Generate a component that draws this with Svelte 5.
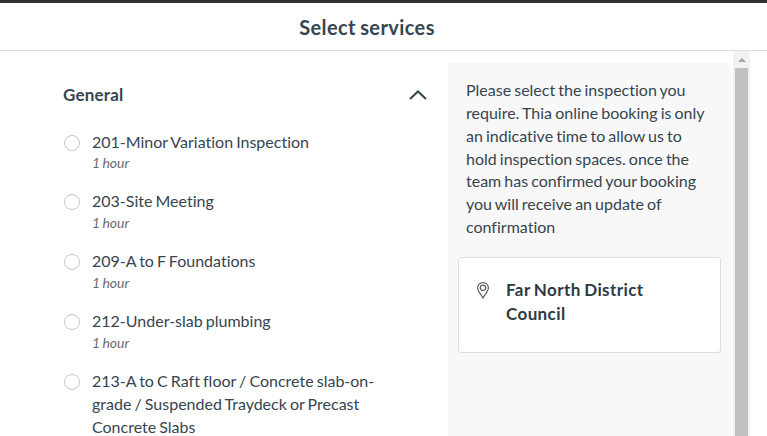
<script lang="ts">
  interface Service {
    id: number;
    name: string;
    duration?: string;
  }

  const services: Service[] = [
    { id: 201, name: '201-Minor Variation Inspection', duration: '1 hour' },
    { id: 203, name: '203-Site Meeting', duration: '1 hour' },
    { id: 209, name: '209-A to F Foundations', duration: '1 hour' },
    { id: 212, name: '212-Under-slab plumbing', duration: '1 hour' },
    {
      id: 213,
      name: '213-A to C Raft floor / Concrete slab-on-grade / Suspended Traydeck or Precast Concrete Slabs'
    }
  ];

  let expanded = $state(true);
  let selected = $state<number | null>(null);
</script>

<div class="page">
  <header class="header">
    <h1>Select services</h1>
  </header>

  <div class="body">
    <main class="services">
      <button class="group-header" aria-expanded={expanded} onclick={() => (expanded = !expanded)}>
        <span>General</span>
        <svg class="chevron" class:collapsed={!expanded} width="18" height="10" viewBox="0 0 18 10" fill="none">
          <path d="M1 9L9 1.4L17 9" stroke="currentColor" stroke-width="2" />
        </svg>
      </button>

      {#if expanded}
        <div class="list">
          {#each services as service (service.id)}
            <label class="service">
              <input type="radio" name="service" value={service.id} bind:group={selected} />
              <span class="details">
                <span class="name">{service.name}</span>
                {#if service.duration}
                  <span class="duration">{service.duration}</span>
                {/if}
              </span>
            </label>
          {/each}
        </div>
      {/if}
    </main>

    <aside class="summary">
      <p>
        Please select the inspection you require. Thia online booking is only an indicative time to
        allow us to hold inspection spaces. once the team has confirmed your booking you will receive
        an update of confirmation
      </p>
      <div class="location">
        <svg width="12" height="17" viewBox="0 0 12 17" fill="none" stroke="currentColor" stroke-width="1.2">
          <path d="M6 16C4.6 12.9 .6 9.1 .6 5.9A5.4 5.3 0 0 1 11.4 5.9C11.4 9.1 7.4 12.9 6 16Z" />
          <circle cx="6" cy="5.8" r="2.7" />
        </svg>
        <strong>Far North District Council</strong>
      </div>
    </aside>

    <div class="scrollbar">
      <div class="arrow"></div>
      <div class="thumb"></div>
    </div>
  </div>
</div>

<style>
  :global(body) {
    background: #fff;
    overflow: hidden;
  }

  .page {
    box-sizing: border-box;
    height: 100vh;
    display: flex;
    flex-direction: column;
    overflow: hidden;
    border-top: 3px solid #302f2f;
    color: #36454f;
    font-family: Lato, sans-serif;
    font-size: 16px;
    font-variant-ligatures: none;
    line-height: 22.857px;
    word-spacing: -1px;
  }

  .header {
    flex: none;
    height: 47px;
    display: flex;
    align-items: center;
    justify-content: center;
    padding-right: 33px;
    border-bottom: 1px solid #dddde5;
  }

  h1 {
    margin: 0;
    font-size: 20px;
    font-weight: 700;
    letter-spacing: 0.4px;
    line-height: 24px;
  }

  .body {
    flex: 1;
    min-height: 0;
    display: flex;
    margin-right: 17px;
  }

  .services {
    width: 364px;
    flex: none;
    padding: 32px 21px 0 63px;
  }

  .group-header {
    display: flex;
    align-items: center;
    justify-content: space-between;
    width: 100%;
    height: 24px;
    padding: 0;
    border: 0;
    background: none;
    color: inherit;
    font: inherit;
    font-size: 17px;
    font-weight: 700;
    letter-spacing: 0.2px;
    cursor: pointer;
  }

  .chevron.collapsed {
    transform: rotate(180deg);
  }

  .list {
    padding-top: 23.5px;
  }

  .service {
    display: flex;
    align-items: flex-start;
    gap: 12px;
    margin-bottom: 17px;
    cursor: pointer;
  }

  input {
    appearance: none;
    box-sizing: border-box;
    flex: none;
    width: 16px;
    height: 16px;
    margin: 4px 0 0 1px;
    border: 1px solid #c4c4c4;
    border-radius: 50%;
  }

  input:checked {
    border: 5px solid #36454f;
  }

  .details {
    max-width: 290px;
  }

  .name,
  .duration {
    display: block;
  }

  .duration {
    color: #6c6c6c;
    font-size: 14px;
    font-style: italic;
    line-height: 20px;
  }

  .summary {
    box-sizing: border-box;
    flex: none;
    width: 283px;
    margin-top: 12px;
    padding: 16px 10px 0;
    background: #f8f8f8;
  }

  p {
    margin: 0;
    padding: 0 8px;
  }

  .location {
    box-sizing: border-box;
    display: flex;
    align-items: flex-start;
    gap: 17px;
    height: 96px;
    margin-top: 18px;
    padding: 20px 40px 0 18px;
    border: 1px solid #ddd;
    border-radius: 3px;
    background: #fff;
    color: #2d3a43;
    font-size: 17px;
    letter-spacing: 0.4px;
    line-height: 24px;
  }

  .location svg {
    flex: none;
    margin-top: 4px;
    color: #59616a;
  }

  .scrollbar {
    box-sizing: border-box;
    width: 17px;
    margin-left: 2px;
    padding: 0 2px;
    display: flex;
    flex-direction: column;
    align-items: center;
    background: #f1f1f1;
  }

  .arrow {
    flex: none;
    margin: 7px 0 6px;
    border: 4px solid transparent;
    border-top: 0;
    border-bottom-color: #a3a3a3;
  }

  .thumb {
    flex: 1;
    width: 100%;
    background: #c1c1c1;
  }
</style>
